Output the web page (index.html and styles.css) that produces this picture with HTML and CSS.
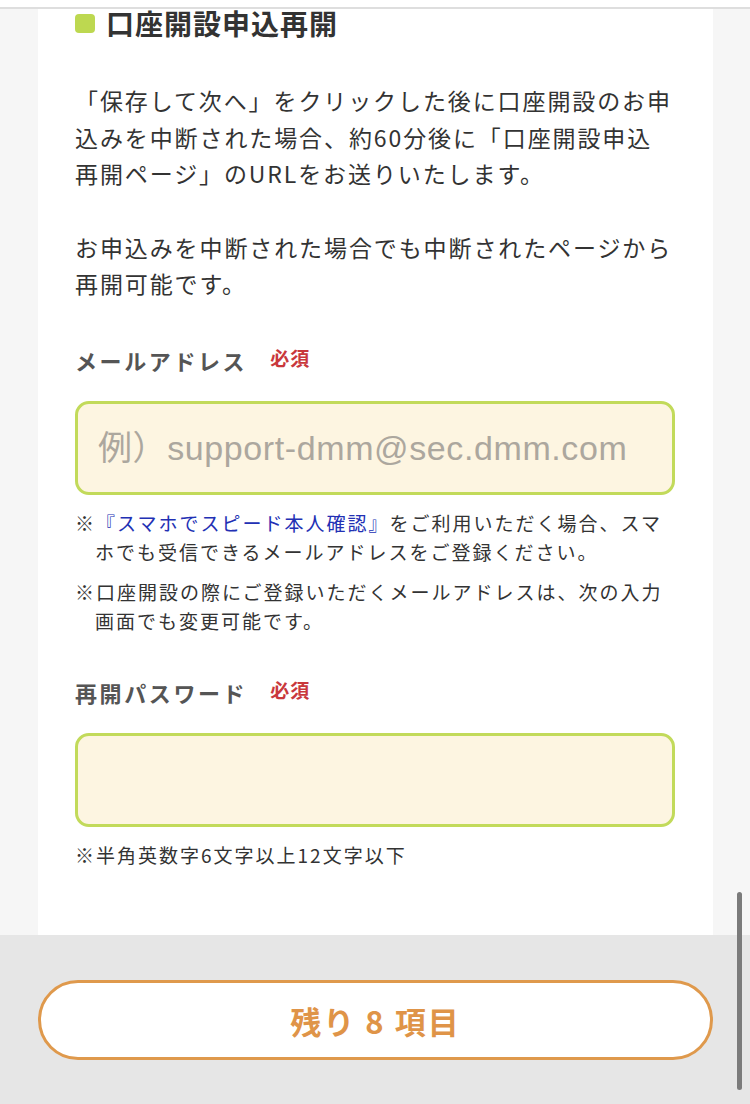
FILE: index.html
```html
<!DOCTYPE html>
<html lang="ja">
<head>
<meta charset="utf-8">
<title>口座開設申込再開</title>
<link rel="stylesheet" href="styles.css">
</head>
<body>
<div class="topbar"></div>
<main class="card">
  <h2 class="heading"><span class="mark"></span>口座開設申込再開</h2>
  <p class="lead">「保存して次へ」をクリックした後に口座開設のお申<br>込みを中断された場合、約60分後に「口座開設申込<br>再開ページ」のURLをお送りいたします。</p>
  <p class="lead lead2">お申込みを中断された場合でも中断されたページから<br>再開可能です。</p>

  <div class="field">
    <div class="label">メールアドレス<span class="req">必須</span></div>
    <input class="box" type="email" placeholder="例）support-dmm@sec.dmm.com">
    <ul class="notes">
      <li>※<a class="link" href="#">『スマホでスピード本人確認』</a>をご利用いただく場合、スマ<br>ホでも受信できるメールアドレスをご登録ください。</li>
      <li>※口座開設の際にご登録いただくメールアドレスは、次の入力<br>画面でも変更可能です。</li>
    </ul>
  </div>

  <div class="field field2">
    <div class="label">再開パスワード<span class="req">必須</span></div>
    <input class="box" type="password">
    <ul class="notes">
      <li>※半角英数字6文字以上12文字以下</li>
    </ul>
  </div>
</main>
<footer class="footer">
  <button class="remain" type="button">残り 8 項目</button>
</footer>
<div class="scroll-indicator"></div>
</body>
</html>
```
FILE: styles.css
```css
html, body {
  margin: 0;
  padding: 0;
}
body {
  background: #f6f6f6;
  font-family: "Noto Sans CJK JP", "Noto Sans", sans-serif;
  color: #333;
  width: 750px;
  height: 1104px;
  overflow: hidden;
  position: relative;
}
.topbar {
  height: 7px;
  background: #fff;
  border-bottom: 2px solid #dedede;
}
.card {
  margin: 0 37px 0 38px;
  background: #fff;
  padding: 0 38px 0 37px;
  height: 926px;
  box-sizing: border-box;
}
.heading {
  margin: 0;
  display: flex;
  align-items: center;
  gap: 11px;
  font-size: 28px;
  line-height: 28px;
  font-weight: 700;
  color: #333;
  letter-spacing: 1px;
}
.mark {
  width: 20px;
  height: 19px;
  border-radius: 4px;
  background: #bdd850;
  flex: none;
}
.lead {
  margin: 45px 0 0;
  font-size: 23px;
  line-height: 36.5px;
  letter-spacing: 1.9px;
  white-space: nowrap;
  color: #333;
}
.lead2 {
  margin-top: 37px;
}
.field {
  margin-top: 40px;
}
.field2 {
  margin-top: 39px;
}
.label {
  font-size: 22px;
  line-height: 36px;
  font-weight: 700;
  color: #555;
  letter-spacing: 2.6px;
  display: flex;
  align-items: center;
}
.req {
  font-size: 19px;
  color: #c9383c;
  margin-left: 23px;
  letter-spacing: 1px;
  position: relative;
  top: -2px;
}
.box {
  display: block;
  margin-top: 23px;
  width: 600px;
  height: 94px;
  box-sizing: border-box;
  border: 3px solid #c2da5a;
  border-radius: 14px;
  background: #fdf5e1;
  padding: 2px 20px 0;
  font-family: "Liberation Sans", "Noto Sans CJK JP", sans-serif;
  font-size: 34px;
  letter-spacing: 0.6px;
  color: #333;
  outline: none;
}
.box::placeholder {
  color: #aca79e;
}
.notes {
  list-style: none;
  margin: 13px 0 0;
  padding: 0;
}
.notes li {
  font-size: 19px;
  line-height: 29px;
  letter-spacing: 2px;
  color: #333;
  padding-left: 20px;
  text-indent: -20px;
  white-space: nowrap;
}
.notes li + li {
  margin-top: 11px;
}
.link {
  color: #2230b4;
  text-decoration: none;
}
.footer {
  height: 169px;
  background: #e6e6e6;
  padding: 45px 37px 0 38px;
  box-sizing: border-box;
}
.remain {
  display: flex;
  align-items: center;
  justify-content: center;
  width: 675px;
  height: 80px;
  box-sizing: border-box;
  border: 3px solid #df994c;
  border-radius: 40px;
  background: #fff;
  color: #df9448;
  font-family: "Noto Sans CJK JP", sans-serif;
  font-size: 31px;
  font-weight: 700;
  letter-spacing: 2px;
  padding: 0;
}
.scroll-indicator {
  position: absolute;
  left: 737px;
  top: 892px;
  width: 5px;
  height: 198px;
  border-radius: 3px;
  background: #7b7b7b;
}
```
